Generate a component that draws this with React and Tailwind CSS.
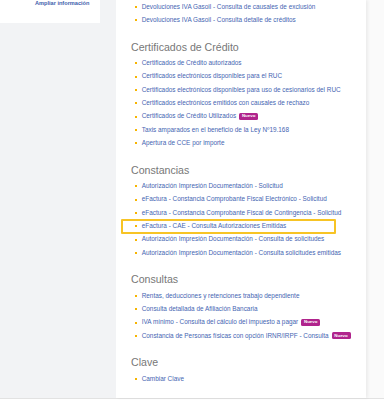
const sections = [
  {
    title: null,
    items: [
      { label: "Devoluciones IVA Gasoil - Consulta de causales de exclusión" },
      { label: "Devoluciones IVA Gasoil - Consulta detalle de créditos" },
    ],
  },
  {
    title: "Certificados de Crédito",
    items: [
      { label: "Certificados de Crédito autorizados" },
      { label: "Certificados electrónicos disponibles para el RUC" },
      { label: "Certificados electrónicos disponibles para uso de cesionarios del RUC" },
      { label: "Certificados electrónicos emitidos con causales de rechazo" },
      { label: "Certificados de Crédito Utilizados", isNew: true },
      { label: "Taxis amparados en el beneficio de la Ley Nº19.168" },
      { label: "Apertura de CCE por importe" },
    ],
  },
  {
    title: "Constancias",
    items: [
      { label: "Autorización Impresión Documentación - Solicitud" },
      { label: "eFactura - Constancia Comprobante Fiscal Electrónico - Solicitud" },
      { label: "eFactura - Constancia Comprobante Fiscal de Contingencia - Solicitud" },
      { label: "eFactura - CAE - Consulta Autorizaciones Emitidas", highlight: true },
      { label: "Autorización Impresión Documentación - Consulta de solicitudes" },
      { label: "Autorización Impresión Documentación - Consulta solicitudes emitidas" },
    ],
  },
  {
    title: "Consultas",
    items: [
      { label: "Rentas, deducciones y retenciones trabajo dependiente" },
      { label: "Consulta detallada de Afiliación Bancaria" },
      { label: "IVA mínimo - Consulta del cálculo del impuesto a pagar", isNew: true },
      { label: "Constancia de Personas físicas con opción IRNR/IRPF - Consulta", isNew: true },
    ],
  },
  {
    title: "Clave",
    items: [{ label: "Cambiar Clave" }],
  },
];

function NewBadge() {
  return (
    <span className="ml-[3px] inline-flex h-[7px] w-[19px] items-center justify-center rounded-[1.5px] bg-[#b0248c] text-[4.4px] font-bold leading-none text-white">
      Nuevo
    </span>
  );
}

function Item({ item }) {
  return (
    <li className="relative flex h-[13.33px] items-center whitespace-nowrap">
      {item.highlight && (
        <div className="absolute -top-[1px] -bottom-[1px] left-[-14px] w-[215px] rounded-[1px] border-solid border-[length:2px] border-[color:#f7c425]"></div>
      )}
      <span className="h-[2px] w-[2px] shrink-0 bg-[#f7b500]"></span>
      <span className="ml-[4.7px] text-[6.4px] leading-none text-[#4565b2]">{item.label}</span>
      {item.isNew && <NewBadge />}
    </li>
  );
}

export default function App() {
  return (
    <div
      className="flex h-[402px] w-[384px] flex-col overflow-hidden bg-white"
      style={{ fontFamily: '"Liberation Sans", Arial, sans-serif' }}
    >
      <div className="flex h-[399px] border-b border-[#e2e2e2]">
        {/* left column */}
        <div className="w-[116px] shrink-0 bg-[#f2f3f5]">
          <div className="h-[23px] w-[100px] bg-white pl-[35px]">
            <span className="block text-[5.6px] font-bold leading-[7px] text-[#3d5eab]">
              Ampliar información
            </span>
          </div>
        </div>

        {/* main panel */}
        <div className="relative z-10 w-[250px] shrink-0 bg-white pt-[0.33px] shadow-[2px_0_3px_rgba(0,0,0,0.06)]">
          {sections.map((section, i) => (
            <div key={i} className={i > 0 ? "mt-[9.7px]" : ""}>
              {section.title && (
                <h2 className="h-[20px] pl-[15px] text-[10.6px] leading-[20px] text-[#777777]">
                  {section.title}
                </h2>
              )}
              <ul className="pl-[19px]">
                {section.items.map((item) => (
                  <Item key={item.label} item={item} />
                ))}
              </ul>
            </div>
          ))}
        </div>

        {/* right gutter */}
        <div className="flex-1 bg-[#fafafa]"></div>
      </div>
    </div>
  );
}
